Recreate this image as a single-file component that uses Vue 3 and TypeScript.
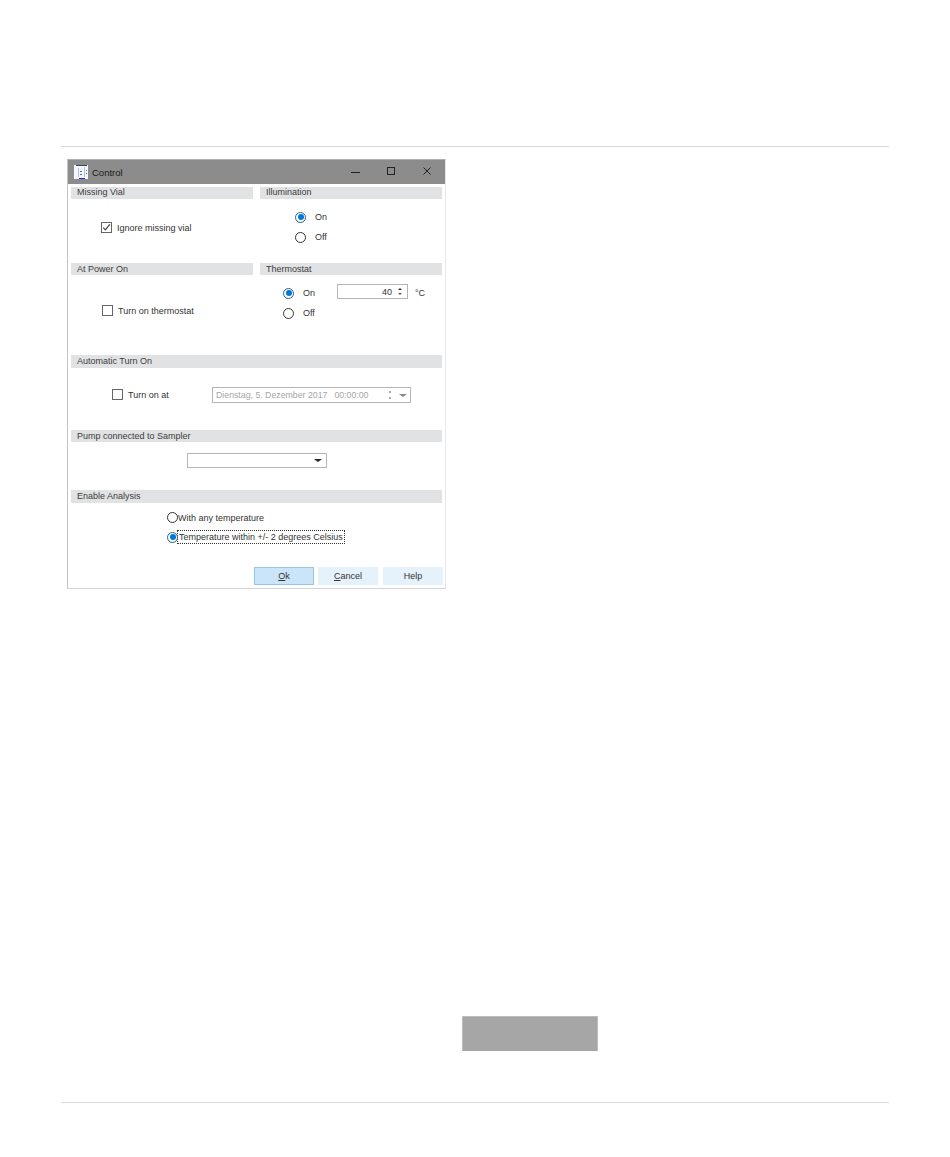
<script setup lang="ts">
const dateText = 'Dienstag, 5. Dezember 2017'
const timeText = '00:00:00'
</script>

<template>
  <div class="page">
    <hr class="rule" />
    <div class="dialog">
      <div class="titlebar">
        <svg class="app-icon" width="14" height="14" viewBox="0 0 14 14">
          <rect x="0" y="0" width="14" height="14" fill="#f5f7fb" />
          <rect x="2" y="0" width="11" height="1" fill="#3a4668" />
          <rect x="5" y="13" width="6" height="1" fill="#1a2fd0" />
          <rect x="4" y="3" width="1" height="9" fill="#b4bdd6" />
          <rect x="10" y="2" width="1" height="10" fill="#b4bdd6" />
          <rect x="6" y="6" width="2" height="1" fill="#4a6fc0" />
          <rect x="6" y="9" width="2" height="1" fill="#4a6fc0" />
          <rect x="12" y="5" width="1" height="1" fill="#4a6fc0" />
          <rect x="12" y="8" width="1" height="1" fill="#4a6fc0" />
        </svg>
        <span class="title">Control</span>
        <div class="win-btns">
          <svg width="9" height="8" viewBox="0 0 9 8"><path d="M0 5.5h9" stroke="#222" fill="none" /></svg>
          <svg width="8" height="8" viewBox="0 0 8 8"><rect x=".5" y=".5" width="7" height="7" stroke="#222" fill="none" /></svg>
          <svg width="8" height="8" viewBox="0 0 8 8"><path d="M.5.5l7 7M7.5.5l-7 7" stroke="#222" fill="none" /></svg>
        </div>
      </div>

      <div class="two-col first">
        <section>
          <h4>Missing Vial</h4>
          <div class="body missing">
            <label class="opt"><span class="check"><svg width="9" height="9" viewBox="0 0 9 9"><path d="M1.2 4.6l2.2 2.3L7.8 1.4" stroke="#444" stroke-width="1.2" fill="none" /></svg></span>Ignore missing vial</label>
          </div>
        </section>
        <section>
          <h4>Illumination</h4>
          <div class="body illum">
            <label class="opt"><span class="radio on"></span><span class="radio-text">On</span></label>
            <label class="opt"><span class="radio"></span><span class="radio-text">Off</span></label>
          </div>
        </section>
      </div>

      <div class="two-col second">
        <section>
          <h4>At Power On</h4>
          <div class="body power">
            <label class="opt"><span class="check"></span>Turn on thermostat</label>
          </div>
        </section>
        <section>
          <h4>Thermostat</h4>
          <div class="body thermo">
            <div class="thermo-row">
              <label class="opt"><span class="radio on"></span><span class="radio-text">On</span></label>
              <div class="spin">
                <span>40</span>
                <span class="arrows"><i class="up"></i><i class="down"></i></span>
              </div>
              <span class="unit">°C</span>
            </div>
            <label class="opt"><span class="radio"></span><span class="radio-text">Off</span></label>
          </div>
        </section>
      </div>

      <section class="auto">
        <h4>Automatic Turn On</h4>
        <div class="body auto-body">
          <label class="opt turn-on"><span class="check"></span>Turn on at</label>
          <div class="date">
            <span>{{ dateText }}</span>
            <span class="time">{{ timeText }}</span>
            <span class="date-spin"><i></i><i></i></span>
            <span class="caret grey"></span>
          </div>
        </div>
      </section>

      <section class="pump">
        <h4>Pump connected to Sampler</h4>
        <div class="body pump-body">
          <div class="select"><span class="caret"></span></div>
        </div>
      </section>

      <section class="enable">
        <h4>Enable Analysis</h4>
        <div class="body enable-body">
          <label class="opt"><span class="radio big"></span><span>With any temperature</span></label>
          <label class="opt"><span class="radio big on"></span><span class="focus">Temperature within +/- 2 degrees Celsius</span></label>
        </div>
      </section>

      <div class="buttons">
        <button class="btn primary"><u>O</u>k</button>
        <button class="btn"><u>C</u>ancel</button>
        <button class="btn help">Help</button>
      </div>
    </div>

    <div class="grey-block"></div>
    <hr class="rule bottom" />
  </div>
</template>

<style>
html, body { margin: 0; background: #fff; }
</style>

<style scoped>
.page {
  width: 950px;
  height: 1157px;
  box-sizing: border-box;
  padding: 146px 61px 0;
  font-family: "Liberation Sans", Arial, sans-serif;
  font-size: 9px;
  color: #333;
  overflow: hidden;
}
.rule { margin: 0; border: 0; border-top: 1px solid #d6dad9; }
.dialog {
  width: 379px;
  height: 430px;
  box-sizing: border-box;
  margin: 12px 0 0 6px;
  border: 1px solid #c4c4c4;
  border-top-color: #b0b0b0;
  border-right-color: #e8e8e8;
  border-bottom-color: #d4d4d4;
  padding-bottom: 3px;
  display: flex;
  flex-direction: column;
}
.titlebar {
  height: 24px;
  flex: none;
  background: #8c8c8c;
  display: flex;
  align-items: center;
  padding-left: 6px;
}
.title { margin-left: 4px; color: #1a1a1a; font-size: 9.5px; }
.win-btns {
  margin-left: auto;
  display: flex;
  gap: 27px;
  padding-right: 14px;
  margin-bottom: 2px;
}
.win-btns svg:last-child { margin-left: 1px; }
h4 {
  margin: 0;
  height: 13px;
  line-height: 13px;
  font-size: 9px;
  font-weight: 400;
  background: #e1e2e4;
  padding-left: 6px;
  color: #3c3c3c;
}
.two-col {
  display: grid;
  grid-template-columns: 182px 182px;
  gap: 7px;
  padding: 0 3px;
}
.two-col h4 { margin-top: 1px; height: 12px; line-height: 12px; }
.first h4 { line-height: 11px; }
.first { margin-top: 2px; height: 76px; }
.second { height: 93px; }
.auto, .pump, .enable { margin: 0 3px; }
.auto { height: 75px; }
.pump { height: 60px; }
.pump h4 { height: 12px; }
.enable { height: 77px; }
.body { display: flex; }
.opt { display: flex; align-items: center; white-space: nowrap; }
.check {
  width: 9px;
  height: 9px;
  border: 1px solid #666;
  background: #fff;
  margin-right: 5px;
  flex: none;
  display: flex;
  align-items: center;
  justify-content: center;
}
.radio {
  width: 9px;
  height: 9px;
  border: 1px solid #333;
  border-radius: 50%;
  flex: none;
  position: relative;
  background: #fff;
}
.radio.on { border-color: #2a5f94; }
.radio.on::after {
  content: "";
  position: absolute;
  inset: 1.5px;
  border-radius: 50%;
  background: #0078d7;
}
.radio-text { margin-left: 9px; }
.missing { padding: 23px 0 0 30px; }
.illum { flex-direction: column; gap: 8px; padding: 12px 0 0 35px; }
.illum .opt { height: 12px; }
.power { padding: 30px 0 0 31px; }
.thermo { flex-direction: column; gap: 6px; padding: 10px 0 0 23px; }
.thermo-row { display: flex; align-items: center; height: 16px; }
.thermo-row .opt { width: 54px; }
.thermo > .opt { height: 12px; }
.spin {
  width: 65px;
  height: 13px;
  border: 1px solid #b5b5b5;
  display: flex;
  align-items: center;
  justify-content: flex-end;
  gap: 4px;
  padding-right: 4px;
  box-sizing: content-box;
  align-self: flex-start;
  margin-top: -1px;
}
.arrows { display: flex; flex-direction: column; gap: 3px; width: 7px; align-items: center; }
.arrows i { width: 0; height: 0; border: 2px solid transparent; }
.arrows .up { border-top: 0; border-bottom: 2px solid #333; }
.arrows .down { border-bottom: 0; border-top: 2px solid #555; }
.unit { margin-left: 7px; }
.auto-body { padding: 18px 0 0 41px; align-items: center; }
.turn-on { width: 100px; }
.date {
  width: 194px;
  height: 14px;
  margin-top: 1px;
  border: 1px solid #b5b5b5;
  display: flex;
  align-items: center;
  padding-left: 3px;
  color: #a6a6a6;
  font-size: 8.75px;
  white-space: nowrap;
}
.time { margin-left: 7px; }
.date-spin { margin-left: 21px; display: flex; flex-direction: column; gap: 4px; }
.date-spin i { width: 2px; height: 2px; background: #aaa; display: block; }
.caret {
  width: 0;
  height: 0;
  border-left: 4px solid transparent;
  border-right: 4px solid transparent;
  border-top: 3px solid #222;
}
.caret.grey { border-top-color: #888; margin-left: 8px; }
.pump-body { padding: 11px 0 0 116px; }
.select {
  width: 138px;
  height: 13px;
  border: 1px solid #b5b5b5;
  display: flex;
  align-items: center;
  justify-content: flex-end;
}
.select .caret { margin-right: 4px; }
.enable-body { flex-direction: column; gap: 8px; padding: 9px 0 0 96px; }
.radio.big { margin-right: 0; }
.focus { outline: 1px dotted #333; padding: 0 1px; line-height: 12px; }
.buttons { display: flex; gap: 4px; padding-left: 186px; margin-top: auto; }
.btn {
  width: 60px;
  height: 18px;
  padding: 0;
  border: 1px solid #e5f1fb;
  background: #e5f1fb;
  font: inherit;
  color: #333;
}
.help { margin-left: 1px; }
.primary { background: #cce4f7; border-color: #94c6ec; }
.grey-block {
  width: 136px;
  height: 35px;
  margin: 427px 0 0 401px;
  background: #a6a6a6;
  box-sizing: border-box;
  border: 1px solid #bcbcbc;
  border-bottom: 0;
}
.bottom { margin-top: 51px; }
</style>
